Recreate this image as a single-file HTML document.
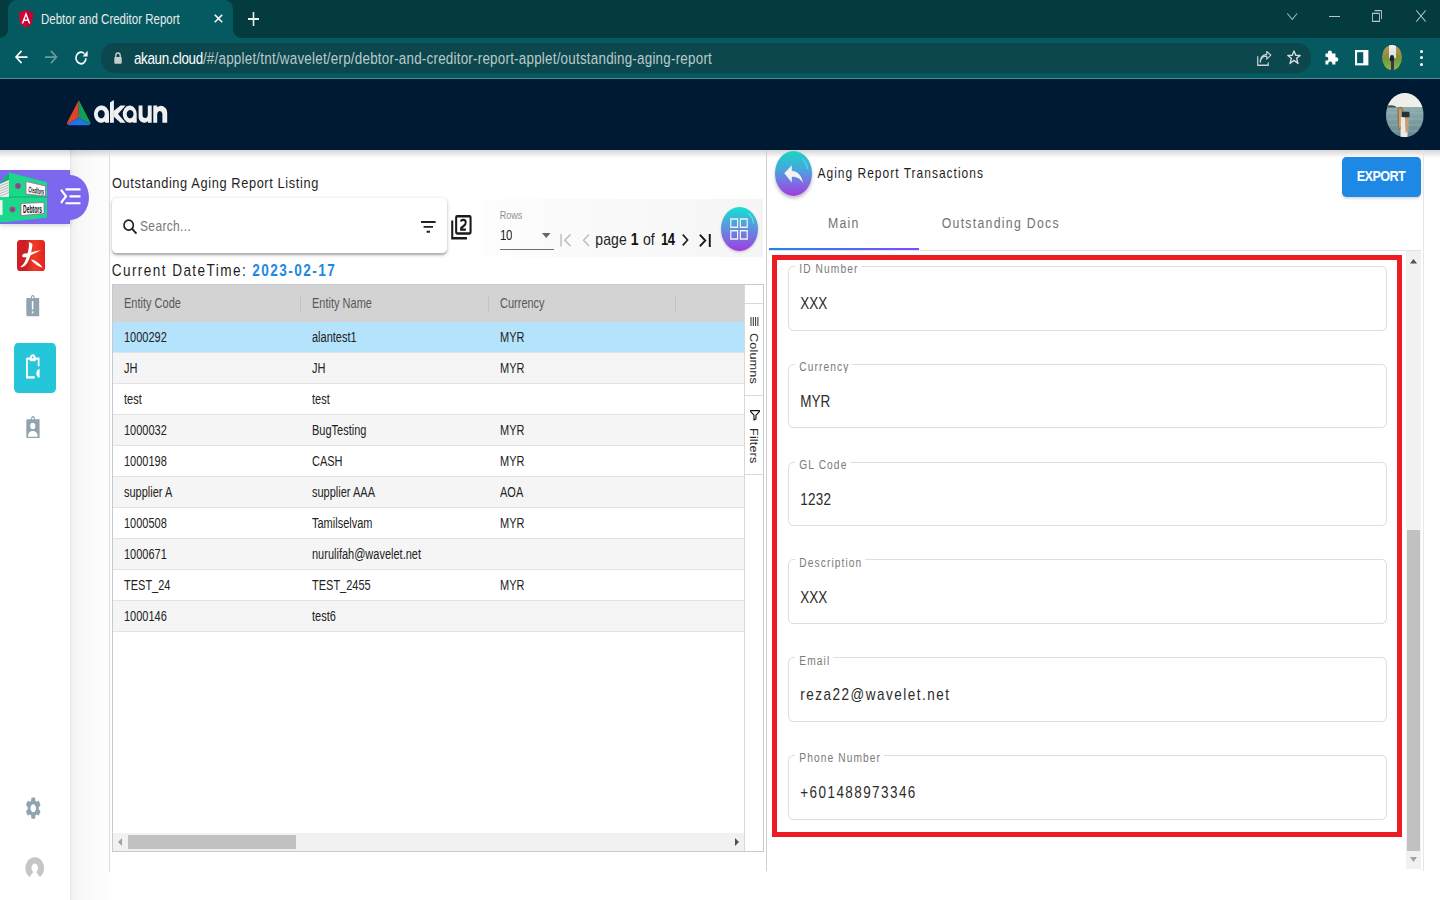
<!DOCTYPE html>
<html><head><meta charset="utf-8">
<style>
html,body{margin:0;padding:0;width:1440px;height:900px;overflow:hidden;background:#fff;}
body{font-family:"Liberation Sans",sans-serif;}
#pg{position:absolute;left:0;top:0;width:1440px;height:900px;overflow:hidden;background:#fff;}
.a{position:absolute;}
.t{position:absolute;white-space:nowrap;line-height:1;transform-origin:0 0;transform:scaleY(1.2);}
.sy{transform-origin:0 0;transform:scaleY(1.2);}
svg{position:absolute;overflow:visible;}
/* chrome */
#chrome{left:0;top:0;width:1440px;height:79px;background:#045a60;}
#tabstrip{left:0;top:0;width:1440px;height:38px;background:#033b3e;}
#tab{left:8px;top:0;width:225px;height:38px;background:#045a60;border-radius:8px 8px 0 0/9.6px 9.6px 0 0;}
#tline{left:0;top:78px;width:1440px;height:1px;background:#4b8f93;}
#omni{left:101px;top:42.5px;width:1210px;height:30.5px;background:#0d474e;border-radius:13px/15.25px;}
#hdr{left:0;top:79px;width:1440px;height:71px;background:#001a33;}
#hshadow{left:0;top:150px;width:1440px;height:8px;background:linear-gradient(rgba(0,0,0,.16),rgba(0,0,0,0));}
.ct{font-size:11.5px;color:#e8eaed;}
/* sidebar */
#sbsh{left:70px;top:150px;width:39px;height:750px;background:linear-gradient(90deg,#e4e4e4,#f1f1f1 5%,#f7f7f7 22%,#fbfbfb 55%,#fdfdfd);}
/* left panel */
#lline{left:109px;top:150px;width:1px;height:721.5px;background:#dcdcdc;}
#rline1{left:766px;top:150px;width:1px;height:721px;background:#d0d0d0;}
#rline2{left:1423px;top:150px;width:1px;height:721px;background:#e6e6e6;}
#search{left:112px;top:198.3px;width:335px;height:54.5px;background:#fff;border-radius:4px/4.8px;box-shadow:0 1.2px 3.6px rgba(0,0,0,.28),0 1.2px 1.2px rgba(0,0,0,.1);}
#pband{left:483px;top:199px;width:280px;height:58px;background:linear-gradient(90deg,#fdfdfd,#f5f5f5);}
#grid{left:112px;top:283.6px;width:651.6px;height:568px;border:1px solid #c7cbd1;box-sizing:border-box;background:#fff;overflow:hidden;}
.row{position:absolute;left:0;width:631px;height:31.03px;border-bottom:1px solid #e2e2e2;box-sizing:border-box;font-size:11px;color:#222;}
.row span{position:absolute;top:8px;line-height:1;white-space:nowrap;transform-origin:0 0;transform:scaleY(1.33);}
.r0{background:#fff;} .r1{background:#f5f5f5;} .sel{background:#b5e3fb;}
.hdrrow{position:absolute;left:0;top:0;width:631px;height:37.6px;background:#d3d3d3;font-size:11px;color:#585858;}
.hdrrow span{position:absolute;top:11.3px;line-height:1;white-space:nowrap;transform-origin:0 0;transform:scaleY(1.3);}
.hsep{position:absolute;top:10px;width:1px;height:17px;background:#c4c4c4;}
/* right panel */
#rbox{left:772.2px;top:255px;width:629.8px;height:581.7px;border:5px solid #ed1c24;border-top-width:5px;border-bottom-width:5px;box-sizing:border-box;}
.fld{position:absolute;left:788.3px;width:598.4px;height:64.5px;border:1px solid #dedede;box-sizing:border-box;border-radius:5px/6px;}
.flab{position:absolute;left:6px;padding:0 3px 0 4px;background:#fff;font-size:10.2px;color:#7a7a7a;letter-spacing:1.1px;line-height:1;white-space:nowrap;transform-origin:0 0;transform:scaleY(1.2);}
.fval{position:absolute;left:11px;font-size:13.5px;color:#2b2b2b;line-height:1;white-space:nowrap;transform-origin:0 0;transform:scaleY(1.2);}
</style></head><body>
<div id="pg">
  <!-- CHROME -->
  <div id="chrome" class="a"></div>
  <div id="tabstrip" class="a"></div>
  <div id="tab" class="a"></div>
  <div class="a" style="left:0;top:30px;width:8px;height:8px;background:radial-gradient(circle at 0 0,#033b3e 7.5px,#045a60 8px);"></div>
  <div class="a" style="left:233px;top:30px;width:8px;height:8px;background:radial-gradient(circle at 100% 0,#033b3e 7.5px,#045a60 8px);"></div>
  <!-- angular icon -->
  <svg style="left:19px;top:10px" width="14" height="17.5px" viewBox="0 0 250 264" preserveAspectRatio="none">
    <path d="M125 0 L0 44 L19 209 L125 264 L231 209 L250 44Z" fill="#dd0031"/>
    <path d="M125 0 L125 264 L231 209 L250 44Z" fill="#c3002f"/>
    <path d="M125 30 L47 205 H76 L92 166 H158 L174 205 H203Z M125 90 L148 142 H102Z" fill="#fff"/>
  </svg>
  <div class="t ct" style="left:41px;top:12.6183px;">Debtor and Creditor Report</div>
  <svg style="left:213.5px;top:14px" width="9" height="9px" viewBox="0 0 9 9" preserveAspectRatio="none"><path d="M0.8 0.8L8.2 8.2M8.2 0.8L0.8 8.2" stroke="#fff" stroke-width="1.6"/></svg>
  <svg style="left:248px;top:12px" width="11" height="14px" viewBox="0 0 11 11" preserveAspectRatio="none"><path d="M5.5 0V11M0 5.5H11" stroke="#e6eeee" stroke-width="1.6"/></svg>
  <!-- window controls -->
  <svg style="left:1286.5px;top:13px" width="10.5" height="7px" viewBox="0 0 10 6" preserveAspectRatio="none"><path d="M0.3 0.3L5 5.5L9.7 0.3" stroke="#9ab7b8" stroke-width="0.9" fill="none"/></svg>
  <svg style="left:1329px;top:16px" width="11" height="1px" viewBox="0 0 11 1" preserveAspectRatio="none"><path d="M0 0.5H11" stroke="#b5c9ca" stroke-width="1"/></svg>
  <svg style="left:1372px;top:10px" width="10" height="12px" viewBox="0 0 10 10" preserveAspectRatio="none"><path d="M0.5 2.8 h6.5 a0.5 0.5 0 0 1 .5 .5 v6.2 h-7z" stroke="#b5c9ca" stroke-width="0.9" fill="none"/><path d="M2.6 0.5 h6.4 a0.5 .5 0 0 1 .5 .5 v6.5" stroke="#b5c9ca" stroke-width="0.9" fill="none"/></svg>
  <svg style="left:1416px;top:10px" width="10" height="12px" viewBox="0 0 10 10" preserveAspectRatio="none"><path d="M0.3 0.3L9.7 9.7M9.7 0.3L0.3 9.7" stroke="#b5c9ca" stroke-width="0.9"/></svg>
  <div id="toolbarline" class="a"></div>
  <!-- nav -->
  <svg style="left:14.5px;top:50px" width="12.5" height="14px" viewBox="0 0 12 12" preserveAspectRatio="none"><path d="M12 6H1.2M6.3 0.8L1 6L6.3 11.2" stroke="#fff" stroke-width="1.5" fill="none"/></svg>
  <svg style="left:44.5px;top:50px" width="12.5" height="14px" viewBox="0 0 12 12" preserveAspectRatio="none"><path d="M0 6H10.8M5.7 0.8L11 6L5.7 11.2" stroke="#6c9da0" stroke-width="1.5" fill="none"/></svg>
  <svg style="left:74.5px;top:50px" width="13" height="15px" viewBox="0 0 13 13" preserveAspectRatio="none"><path d="M11 7.2A5 5 0 1 1 9.3 3.1" stroke="#fff" stroke-width="1.6" fill="none"/><path d="M12.6 0.6V5.6H7.6Z" fill="#fff"/></svg>
  <div id="omni" class="a"></div>
  <svg style="left:114.4px;top:52.2px" width="8" height="11.7px" viewBox="0 0 8 10" preserveAspectRatio="none"><path d="M1.8 4.5V3A2.2 2.2 0 0 1 6.2 3V4.5" stroke="#c8cfd0" stroke-width="1.3" fill="none"/><rect x="0.3" y="4.3" width="7.4" height="5.7" rx="0.8" fill="#c8cfd0"/></svg>
  <div class="t" style="left:133.9px;top:51.2883px;font-size:13.4px;color:#fff;letter-spacing:-0.29px;">akaun.cloud<span style="color:#b9cacb;letter-spacing:0.23px;">/#/applet/tnt/wavelet/erp/debtor-and-creditor-report-applet/outstanding-aging-report</span></div>
  <!-- right toolbar icons -->
  <svg style="left:1256.7px;top:51px" width="14.3" height="15px" viewBox="0 0 14 14" preserveAspectRatio="none"><path d="M0.7 5V13.3H11V10.8" stroke="#c5d3d4" stroke-width="1.2" fill="none"/><path d="M3.2 10.5C3.5 6.5 6 4.8 9.5 4.8V7.6L13.5 3.8L9.5 0.5V3.2C5.5 3.5 3.2 6.5 3.2 10.5Z" stroke="#c5d3d4" stroke-width="1.1" fill="none" stroke-linejoin="round"/></svg>
  <svg style="left:1287px;top:50px" width="14" height="15px" viewBox="0 0 14 14" preserveAspectRatio="none"><path d="M7 0.9L8.8 5H13.2L9.6 7.7L11 12.6L7 9.7L3 12.6L4.4 7.7L0.8 5H5.2Z" stroke="#d7dede" stroke-width="1.3" fill="none" stroke-linejoin="round"/></svg>
  <svg style="left:1324.7px;top:50px" width="13.8" height="15px" viewBox="0 0 14 14" preserveAspectRatio="none"><path d="M5 0.5C6.3 0.5 7 1.3 7 2.5V3.2H10.6V6.8H11.3C12.6 6.8 13.5 7.6 13.5 8.8C13.5 10 12.6 10.8 11.3 10.8H10.6V13.5H7.4V12.6C7.4 11.5 6.6 10.7 5.4 10.7C4.2 10.7 3.4 11.5 3.4 12.6V13.5H0.5V9.9H1.3C2.6 9.9 3.4 9.2 3.4 8.1C3.4 7 2.6 6.3 1.3 6.3H0.5V3.2H3V2.5C3 1.3 3.7 0.5 5 0.5Z" fill="#fff"/></svg>
  <svg style="left:1354.6px;top:49.6px" width="13.4" height="15.4px" viewBox="0 0 13 14" preserveAspectRatio="none"><rect x="1" y="1" width="11" height="12" stroke="#fff" stroke-width="2" fill="none"/><rect x="8" y="1" width="4" height="12" fill="#fff"/></svg>
  <div class="a" style="left:1381.7px;top:45px;width:20.5px;height:25px;border-radius:50%;overflow:hidden;background:linear-gradient(180deg,#b99a52 0%,#9c8a4a 40%,#6f9a3a 55%,#9bb04e 100%);">
    <div class="a" style="left:7px;top:0;width:7px;height:13px;background:linear-gradient(#f1f1ee,#d9dcd6);"></div>
    <div class="a" style="left:8.5px;top:10px;width:4px;height:6px;background:#222;border-radius:2px 2px 0 0;"></div>
    <div class="a" style="left:9px;top:15.5px;width:3px;height:10px;background:#2a3a55;"></div>
  </div>
  <div class="a" style="left:1420px;top:49.5px;width:3px;height:3px;border-radius:50%;background:#fff;"></div>
  <div class="a" style="left:1420px;top:56px;width:3px;height:3px;border-radius:50%;background:#fff;"></div>
  <div class="a" style="left:1420px;top:62.5px;width:3px;height:3px;border-radius:50%;background:#fff;"></div>
  <div id="tline" class="a"></div>

  <!-- APP HEADER -->
  <div id="hdr" class="a"></div>
  <svg style="left:66.7px;top:99.9px" width="23.5" height="25.3px" viewBox="0 0 24 22" preserveAspectRatio="none">
    <path d="M12 0 L12 15.5 L0.5 21 Q-0.5 20.5 0 19.8Z" fill="#e0432b"/>
    <path d="M12 0 L24 19.8 Q24.3 20.6 23.5 21 L12 15.5Z" fill="#10a05a"/>
    <path d="M12 15.5 L23.5 21 Q23 22 22 22 H2 Q1 22 0.5 21Z" fill="#1b74e8"/>
  </svg>
  <svg style="left:90px;top:95px" width="80" height="33" viewBox="0 0 80 33" preserveAspectRatio="none">
    <g transform="scale(1,1.2)" fill="#f0f0f0">
      <path fill-rule="evenodd" d="M11.25 8.75A7.3 7.2 0 1 0 15.1 22.1V23.17H19V15.9A7.4 7.2 0 0 0 11.25 8.75ZM11.25 12.5A3.5 3.45 0 1 0 11.26 12.5Z"/>
      <path d="M20 6.2L23.9 4.2V23.17H20Z"/>
      <path d="M23.9 13.2L30.5 8.75H35.6L28 15.9L35.6 23.17H30.5L23.9 18.2Z"/>
      <path fill-rule="evenodd" d="M40.1 8.75A7.2 7.2 0 1 0 42.9 22.5V23.17H46.7V15.9A7.2 7.2 0 0 0 40.1 8.75ZM40.1 12.5A3.45 3.45 0 1 0 40.11 12.5Z"/>
      <path d="M48.6 8.75H52.5V16.3A2.6 2.9 0 0 0 57.8 16.3V8.75H61.7V23.17H57.8V21.6A5.5 5.5 0 0 1 48.6 17Z"/>
      <path d="M63.3 23.17H67.2V15.6A2.65 2.9 0 0 1 72.4 15.6V23.17H77.2V15A6.2 6.2 0 0 0 67.2 10.3V8.75H63.3Z"/>
    </g>
  </svg>
  <svg style="left:1386px;top:92.7px" width="37.7" height="44.3" viewBox="0 0 37.7 44.3">
    <defs><clipPath id="avc"><ellipse cx="18.85" cy="22.15" rx="18.85" ry="22.15"/></clipPath>
    <linearGradient id="sea" x1="0" y1="0" x2="0" y2="1"><stop offset="0" stop-color="#a3bdbf"/><stop offset="1" stop-color="#638a90"/></linearGradient></defs>
    <g clip-path="url(#avc)">
      <rect width="37.7" height="44.3" fill="url(#sea)"/>
      <rect width="37.7" height="14" fill="#efefea"/>
      <path d="M0 14.5L2 12.6L6 12.2L9 13L11 14.5Z" fill="#3f524c"/>
      <path d="M0 20H37.7M0 26H37.7M0 32H37.7M0 38H37.7" stroke="#b9cfd0" stroke-width="0.6" opacity="0.6"/>
      <path d="M11.5 16C12 14 14 13.5 15.5 14C17 14.5 17.5 17 17.3 20L17 35L12.3 38C11.5 31 11 23 11.5 16Z" fill="#9a7650"/>
      <path d="M13 16C13.5 15 15 15 15.5 16L15.3 33L13 35Z" fill="#c0a078"/>
      <path d="M15 24H21.5V44.3H14.5Z" fill="#ece8e6"/>
      <path d="M19 24H23L22.5 38L19.5 40Z" fill="#c49c76"/>
      <rect x="16" y="18.8" width="7.5" height="5.5" rx="1" fill="#2b2f33"/>
    </g>
  </svg>
  <!-- SIDEBAR -->
  <div id="sbsh" class="a"></div>
  <div id="hshadow" class="a"></div>
  <!-- purple menu -->
  <div class="a" style="left:0;top:170px;width:70px;height:54.4px;background:#7b68ee;box-shadow:0 2.4px 4.8px rgba(0,0,0,.18);"></div>
  <div class="a" style="left:51px;top:174.9px;width:38px;height:45.6px;border-radius:50%;background:#7b68ee;"></div>
  <!-- folders -->
  <svg style="left:0;top:171px" width="48" height="52" viewBox="0 0 48 52">
    <path d="M0 12.5L9 1.6L47 11.3V27H0Z" fill="#1ad98a"/>
    <path d="M0 12.5L9 1.6V9L0 13Z" fill="#0fb56f"/>
    <path d="M0 13L9 9V26H0Z" fill="#ececec"/>
    <path d="M0 15L9 11.5M0 17.5L9 14M0 20L9 16.5M0 22.5L9 19M0 25L9 21.5" stroke="#a8a8a8" stroke-width="0.7"/>
    <path d="M9 25H47V27H9Z" fill="#14c27a"/>
    <circle cx="18" cy="15" r="2.4" fill="#5d5d6a" stroke="#c03aa0" stroke-width="1.1"/>
    <path d="M26 10.5L45.5 15V25L26 23Z" fill="#fff" stroke="#b84a9a" stroke-width="0.7"/>
    <text x="28" y="21.3" textLength="16" lengthAdjust="spacingAndGlyphs" font-size="8.5" font-family="Liberation Sans" font-weight="bold" fill="#111" transform="rotate(9 28 21)">Creditors</text>
    <path d="M0 27H47V46.7L2 51.5L0 51Z" fill="#1ad98a"/>
    <path d="M0 29H2.5V44H0Z" fill="#f2f2f2"/>
    <circle cx="12.5" cy="38.5" r="2.4" fill="#5d5d6a" stroke="#c03aa0" stroke-width="1.1"/>
    <path d="M21 32.5L44 31.5V42.5L21 44.5Z" fill="#fff" stroke="#b84a9a" stroke-width="0.7"/>
    <text x="23" y="42" textLength="19" lengthAdjust="spacingAndGlyphs" font-size="10" font-family="Liberation Sans" font-weight="bold" fill="#111">Debtors</text>
  </svg>
  <svg style="left:60px;top:188.3px" width="21" height="16.7px" viewBox="0 0 21 14" preserveAspectRatio="none">
    <path d="M1 1.5L6 7L1 12.5" stroke="#fff" stroke-width="2" fill="none"/>
    <path d="M5.5 1.2H20.5M9.5 7H20.5M5.5 12.8H20.5" stroke="#fff" stroke-width="1.8"/>
  </svg>
  <!-- red app icon -->
  <div class="a" style="left:16.7px;top:239.8px;width:28.3px;height:31.1px;border-radius:3px/3.6px;background:linear-gradient(90deg,#d42027,#c81e25 30%,#ef3b24 60%,#e2231f);"></div>
  <svg style="left:16.7px;top:239.8px" width="28.3" height="31.1" viewBox="0 0 28 28" preserveAspectRatio="none">
    <path d="M11.5 2.3C13.5 1.8 15.6 2.8 15.3 4.8L14.2 10.5C13.2 15 11.5 19.5 8.5 22.5C7 24 5 24.8 3.3 24.3C4.5 23.2 6.5 21.8 7.6 19.8C9.5 16 10.7 12 11.8 6C12 4.5 12 3.4 11.5 2.3Z" fill="#fff"/>
    <path d="M5.5 13.2C6.5 12 8.5 12.3 10.5 12C14.5 11 19 9.5 23.8 9.2C19.5 11.2 15 13 10.8 14.8C9 15.5 7 16 5.5 15.2C5 14.7 5 13.8 5.5 13.2Z" fill="#fff"/>
    <path d="M13.8 17.3C15.5 17.6 18 18.6 20.5 20.3C22.5 21.6 24.5 23.2 25.2 25C22.5 24.3 19.5 22.7 17.3 21C15.8 19.9 14.6 18.6 13.8 17.3Z" fill="#fff"/>
  </svg>
  <!-- clipboard alert -->
  <svg style="left:26.4px;top:295px" width="13.2" height="21.8px" viewBox="0 0 14 18" preserveAspectRatio="none">
    <path d="M1.5 2.5H5.2C5.2 1 6 0 7.2 0C8.4 0 9.2 1 9.2 2.5H14V17.6H1.5Q0.3 17.6 0.3 16.4V3.7Q0.3 2.5 1.5 2.5Z" fill="#90a4ae"/>
    <circle cx="7.2" cy="2" r="0.9" fill="#fff"/>
    <rect x="6.2" y="5" width="1.6" height="7" fill="#fff"/>
    <rect x="6.2" y="13.5" width="1.6" height="1.6" fill="#fff"/>
  </svg>
  <!-- teal active -->
  <div class="a" style="left:14.2px;top:342.6px;width:41.8px;height:50.2px;border-radius:4px/4.8px;background:#26c6da;"></div>
  <svg style="left:26.4px;top:355px" width="13.6" height="23.5px" viewBox="0 0 14 19" preserveAspectRatio="none">
    <path d="M1 3H5C5 1.3 6 0.3 7 0.3C8 0.3 9 1.3 9 3H13V9" stroke="#fff" stroke-width="1.8" fill="none"/>
    <path d="M1 2.5V18H9" stroke="#fff" stroke-width="1.8" fill="none"/>
    <path d="M14 11A4 4 0 0 0 14 18.5Z M13 11.5 A3.6 3.6 0 0 0 13 18.3" fill="#fff"/>
    <rect x="4" y="2.5" width="6" height="2.5" fill="#fff"/>
  </svg>
  <!-- clipboard account -->
  <svg style="left:26.4px;top:416px" width="13.6" height="22.5px" viewBox="0 0 14 18" preserveAspectRatio="none">
    <path d="M1.5 2.5H5.2C5.2 1 6 0 7.2 0C8.4 0 9.2 1 9.2 2.5H14V17.6H1.5Q0.3 17.6 0.3 16.4V3.7Q0.3 2.5 1.5 2.5Z" fill="#90a4ae"/>
    <circle cx="7.2" cy="2" r="0.9" fill="#fff"/>
    <circle cx="7" cy="8" r="2.6" fill="#fff"/>
    <path d="M2 16.5C2 13 4.5 12 7 12C9.5 12 12 13 12 16.5Z" fill="#fff"/>
  </svg>
  <!-- gear -->
  <svg style="left:25.7px;top:796.6px" width="14.5" height="22.4" viewBox="2.6 1.9 18.8 20.2" preserveAspectRatio="none">
    <path fill="#90a4ae" d="M19.14 12.94c.04-.3.06-.61.06-.94 0-.32-.02-.64-.07-.94l2.03-1.58a.49.49 0 0 0 .12-.61l-1.92-3.32a.488.488 0 0 0-.59-.22l-2.39.96c-.5-.38-1.03-.7-1.62-.94l-.36-2.54a.484.484 0 0 0-.48-.41h-3.84c-.24 0-.43.17-.47.41l-.36 2.54c-.59.24-1.13.57-1.62.94l-2.39-.96c-.22-.08-.47 0-.59.22L2.74 8.87c-.12.21-.08.47.12.61l2.03 1.58c-.05.3-.09.63-.09.94s.02.64.07.94l-2.03 1.58a.49.49 0 0 0-.12.61l1.92 3.32c.12.22.37.29.59.22l2.39-.96c.5.38 1.03.7 1.62.94l.36 2.54c.05.24.24.41.48.41h3.84c.24 0 .44-.17.47-.41l.36-2.54c.59-.24 1.13-.56 1.62-.94l2.39.96c.22.08.47 0 .59-.22l1.92-3.32c.12-.22.07-.47-.12-.61l-2.01-1.58zM12 15.6c-1.98 0-3.6-1.62-3.6-3.6s1.62-3.6 3.6-3.6 3.6 1.62 3.6 3.6-1.62 3.6-3.6 3.6z"/>
  </svg>
  <!-- person -->
  <svg style="left:24.9px;top:856.5px" width="19.5" height="20" viewBox="0 0 20 20" preserveAspectRatio="none">
    <path d="M6.56 17.45A6.5 7.6 0 1 1 13.44 17.45" stroke="#c6c6c6" stroke-width="6.3" fill="none"/>
  </svg>

  <!-- LEFT PANEL -->
  <div id="lline" class="a"></div>
  <div class="t" style="left:112px;top:175.9978px;font-size:12.8px;color:#1f1f1f;letter-spacing:0.62px;">Outstanding Aging Report Listing</div>
  <div id="search" class="a"></div>
  <svg style="left:122.8px;top:219px" width="14.2" height="15.4px" viewBox="0 0 14 14" preserveAspectRatio="none"><circle cx="5.6" cy="5.6" r="4.6" stroke="#222" stroke-width="1.6" fill="none"/><path d="M8.9 8.9L13.3 13.3" stroke="#222" stroke-width="1.8"/></svg>
  <div class="t" style="left:140px;top:218.8104px;font-size:12px;color:#777;letter-spacing:0.35px;">Search...</div>
  <svg style="left:420.8px;top:220.7px" width="14.6" height="11.8px" viewBox="0 0 14.6 10" preserveAspectRatio="none"><path d="M0 0.9H14.6M2.6 5H12M5.6 9.1H9" stroke="#222" stroke-width="1.6"/></svg>
  <svg style="left:451.4px;top:215px" width="20.6" height="24.7px" viewBox="0 0 20 20" preserveAspectRatio="none">
    <path d="M1.2 4.5V18.8H15.5" stroke="#1a1a1a" stroke-width="2" fill="none"/>
    <rect x="5" y="1" width="14" height="14" rx="1" stroke="#1a1a1a" stroke-width="2" fill="none"/>
    <path d="M9.5 5.2Q9.8 4 12 4Q14.3 4 14.3 6Q14.3 7.5 12.5 8.7L9.8 10.6V11.8H14.5" stroke="#1a1a1a" stroke-width="1.9" fill="none"/>
  </svg>
  <div id="pband" class="a"></div>
  <div class="t" style="left:499.7px;top:210.8578px;font-size:9px;color:#8f8f8f;">Rows</div>
  <div class="t" style="left:500px;top:228.6183px;font-size:11.5px;color:#222;letter-spacing:-0.4px;">10</div>
  <div class="a" style="left:500px;top:248.5px;width:54px;height:1.2px;background:#6f6f6f;"></div>
  <svg style="left:541.7px;top:233px" width="8.5" height="5px" viewBox="0 0 10 5" preserveAspectRatio="none"><path d="M0 0H10L5 5Z" fill="#666"/></svg>
  <svg style="left:559.7px;top:234px" width="11.5" height="12.5px" viewBox="0 0 11 12" preserveAspectRatio="none"><path d="M1 0V12" stroke="#c2b4b4" stroke-width="1.3"/><path d="M10 0.5L4.5 6L10 11.5" stroke="#b9b9b9" stroke-width="1.3" fill="none"/></svg>
  <svg style="left:582px;top:234px" width="8" height="12.5px" viewBox="0 0 8 12" preserveAspectRatio="none"><path d="M7 0.5L1.5 6L7 11.5" stroke="#b9b9b9" stroke-width="1.3" fill="none"/></svg>
  <div class="t" style="left:595.3px;top:231.2788px;font-size:14px;color:#222;letter-spacing:0.1px;">page</div>
  <div class="t" style="left:630.8px;top:231.2788px;font-size:14px;color:#111;font-weight:bold;">1</div>
  <div class="t" style="left:643px;top:231.2788px;font-size:14px;color:#222;">of</div>
  <div class="t" style="left:661px;top:232.2946px;font-size:13px;color:#111;font-weight:bold;letter-spacing:-0.6px;">14</div>
  <svg style="left:682px;top:233.5px" width="6.5" height="12px" viewBox="0 0 7 12" preserveAspectRatio="none"><path d="M0.8 0.7L6 6L0.8 11.3" stroke="#1a1a1a" stroke-width="1.7" fill="none"/></svg>
  <svg style="left:699.4px;top:233.5px" width="11.6" height="13px" viewBox="0 0 11 12" preserveAspectRatio="none"><path d="M0.8 0.7L6 6L0.8 11.3" stroke="#1a1a1a" stroke-width="1.7" fill="none"/><path d="M10.2 0V12" stroke="#111" stroke-width="1.8"/></svg>
  <div class="a" style="left:721px;top:206.8px;width:36.8px;height:44.45px;border-radius:50%;background:linear-gradient(180deg,#12e3cf 0%,#4aa7dc 35%,#7a6ee0 70%,#a23ae0 100%);box-shadow:0 1.2px 2.4px rgba(0,0,0,.2);"></div>
  <svg style="left:730px;top:218px" width="18" height="22" viewBox="0 0 18 18" preserveAspectRatio="none"><rect x="0.8" y="0.8" width="6.8" height="6.8" stroke="#f4f4f4" stroke-width="1.2" fill="none"/><rect x="10.4" y="0.8" width="6.8" height="6.8" stroke="#f4f4f4" stroke-width="1.2" fill="none"/><rect x="0.8" y="10.4" width="6.8" height="6.8" stroke="#f4f4f4" stroke-width="1.2" fill="none"/><rect x="10.4" y="10.4" width="6.8" height="6.8" stroke="#f4f4f4" stroke-width="1.2" fill="none"/></svg>
  <svg style="left:721px;top:206.8px" width="37" height="44" viewBox="0 0 37 44" preserveAspectRatio="none"><path d="M27.5 6Q31.5 10 32.8 16.5" stroke="#8ff0f0" stroke-width="0.9" fill="none" opacity="0.85"/></svg>
  <div class="t" style="left:111.7px;top:262.7851px;font-size:13.6px;color:#1f1f1f;letter-spacing:1.42px;">Current DateTime: <b style="color:#1e88e5;letter-spacing:1.45px;">2023-02-17</b></div>

  <div id="grid" class="a">
    <div class="hdrrow"><span style="left:11px">Entity Code</span><div class="hsep" style="left:187px"></div><span style="left:199px">Entity Name</span><div class="hsep" style="left:375px"></div><span style="left:387px">Currency</span><div class="hsep" style="left:562px"></div></div>
    <div class="row sel" style="top:37.6px"><span style="left:11px">1000292</span><span style="left:199px">alantest1</span><span style="left:387px">MYR</span></div>
    <div class="row r1" style="top:68.63px"><span style="left:11px">JH</span><span style="left:199px">JH</span><span style="left:387px">MYR</span></div>
    <div class="row r0" style="top:99.66px"><span style="left:11px">test</span><span style="left:199px">test</span><span style="left:387px"></span></div>
    <div class="row r1" style="top:130.69px"><span style="left:11px">1000032</span><span style="left:199px">BugTesting</span><span style="left:387px">MYR</span></div>
    <div class="row r0" style="top:161.72px"><span style="left:11px">1000198</span><span style="left:199px">CASH</span><span style="left:387px">MYR</span></div>
    <div class="row r1" style="top:192.75px"><span style="left:11px">supplier A</span><span style="left:199px">supplier AAA</span><span style="left:387px">AOA</span></div>
    <div class="row r0" style="top:223.78px"><span style="left:11px">1000508</span><span style="left:199px">Tamilselvam</span><span style="left:387px">MYR</span></div>
    <div class="row r1" style="top:254.81px"><span style="left:11px">1000671</span><span style="left:199px">nurulifah@wavelet.net</span><span style="left:387px"></span></div>
    <div class="row r0" style="top:285.84px"><span style="left:11px">TEST_24</span><span style="left:199px">TEST_2455</span><span style="left:387px">MYR</span></div>
    <div class="row r1" style="top:316.87px"><span style="left:11px">1000146</span><span style="left:199px">test6</span><span style="left:387px"></span></div>
    <!-- side bar -->
    <div class="a" style="left:631px;top:0;width:20px;height:566px;background:#fff;border-left:1px solid #d9d9d9;box-sizing:border-box;"></div>
    <div class="a" style="left:631px;top:18px;width:20px;height:1px;background:#d9d9d9;"></div>
    <div class="a" style="left:631px;top:110px;width:20px;height:1px;background:#d9d9d9;"></div>
    <div class="a" style="left:631px;top:189px;width:20px;height:1px;background:#d9d9d9;"></div>
    <svg style="left:637px;top:32px" width="9" height="9px" viewBox="0 0 9 9" preserveAspectRatio="none"><path d="M1 0V9M3.3 0V9M5.6 0V9M7.9 0V9" stroke="#333" stroke-width="1"/></svg>
    <div class="t" style="left:645.5px;top:48px"><span style="display:block;font-size:10.6px;color:#2a2a2a;transform-origin:0 0;transform:rotate(90deg);letter-spacing:0.1px;">Columns</span></div>
    <svg style="left:636.8px;top:125.8px" width="10" height="10.5" viewBox="0 0 10 10.5" preserveAspectRatio="none"><path d="M0.6 0.6H9.4V1.6L6 5.2V9L4 10V5.2L0.6 1.6Z" stroke="#111" stroke-width="1.1" fill="none" stroke-linejoin="round"/></svg>
    <div class="t" style="left:645.5px;top:143px" ><span style="display:block;font-size:10.6px;color:#2a2a2a;transform-origin:0 0;transform:rotate(90deg);letter-spacing:0.1px;">Filters</span></div>
    <!-- h scrollbar -->
    <div class="a" style="left:0;top:548.2px;width:631px;height:18px;background:#f1f1f1;"></div>
    <div class="a" style="left:15.3px;top:550.4px;width:167.7px;height:14.5px;background:#c1c1c1;"></div>
    <svg style="left:5px;top:553px" width="4" height="8px" viewBox="0 0 4 8" preserveAspectRatio="none"><path d="M4 0V8L0 4Z" fill="#a3a3a3"/></svg>
    <svg style="left:622px;top:553px" width="4" height="8px" viewBox="0 0 4 8" preserveAspectRatio="none"><path d="M0 0V8L4 4Z" fill="#505050"/></svg>
  </div>

  <!-- RIGHT PANEL -->
  <div id="rline1" class="a"></div>
  <div id="rline2" class="a"></div>
  <div class="a" style="left:774.7px;top:151.3px;width:37.3px;height:44.7px;border-radius:50%;background:linear-gradient(180deg,#17d5c5 0%,#45a8dc 40%,#7a70e2 70%,#a23ae0 100%);box-shadow:0 2.4px 3.6px rgba(0,0,0,.25);"></div>
  <svg style="left:783.8px;top:164.5px" width="19.5" height="18.5" viewBox="0 0 20 18" preserveAspectRatio="none"><path d="M8 0.3L0.3 8L8 17V11.5C13 11.5 16.5 12.8 19.5 17.5C18.5 11 14.8 6.2 8 5.5Z" fill="#f3f3f3"/></svg>
  <svg style="left:775px;top:152px" width="37" height="44" viewBox="0 0 37 44" preserveAspectRatio="none"><path d="M27.5 6.5Q31.5 10.5 32.8 17" stroke="#7fe9ef" stroke-width="0.9" fill="none" opacity="0.85"/></svg>
  <div class="t" style="left:817.5px;top:165.8104px;font-size:12px;color:#1f1f1f;letter-spacing:1px;">Aging Report Transactions</div>
  <div class="a" style="left:1341.8px;top:156.8px;width:79px;height:40.1px;border-radius:4px/4.8px;background:#1e88e5;box-shadow:0 1.8px 2.4px rgba(0,0,0,.14);"></div>
  <div class="t" style="left:1356.7px;top:168.8009px;font-size:12.6px;font-weight:bold;color:#fff;letter-spacing:-0.55px;">EXPORT</div>
  <div class="t" style="left:828px;top:216.3057px;font-size:12.3px;color:#737373;letter-spacing:1.26px;">Main</div>
  <div class="t" style="left:941.7px;top:216.3057px;font-size:12.3px;color:#737373;letter-spacing:1.28px;">Outstanding Docs</div>
  <div class="a" style="left:769px;top:249.5px;width:652px;height:1.5px;background:#e3e3e3;"></div>
  <svg style="left:769px;top:248px" width="150" height="2px" viewBox="0 0 150 2" preserveAspectRatio="none"><defs><linearGradient id="ug"><stop offset="0" stop-color="#1e88e5"/><stop offset="1" stop-color="#7c4dff"/></linearGradient></defs><rect width="150" height="2" fill="url(#ug)"/></svg>
  <div class="a" style="left:1405.7px;top:251px;width:15.1px;height:618.4px;background:#f1f1f1;"></div>
  <svg style="left:1410px;top:258.7px" width="7" height="4.5px" viewBox="0 0 7 4" preserveAspectRatio="none"><path d="M0 4H7L3.5 0Z" fill="#505050"/></svg>
  <div class="a" style="left:1407px;top:530px;width:13px;height:320.5px;background:#c1c1c1;"></div>
  <svg style="left:1410px;top:857px" width="7" height="5px" viewBox="0 0 7 4" preserveAspectRatio="none"><path d="M0 0H7L3.5 4Z" fill="#a3a3a3"/></svg>
  <div id="rbox" class="a"></div>
  <div class="fld" style="top:266px"><div class="flab" style="top:-3.5612px">ID Number</div><div class="fval" style="top:29.1867px">XXX</div></div>
  <div class="fld" style="top:363.8px"><div class="flab" style="top:-3.5612px">Currency</div><div class="fval" style="top:29.1867px">MYR</div></div>
  <div class="fld" style="top:461.6px"><div class="flab" style="top:-3.5612px">GL Code</div><div class="fval" style="top:29.1867px;letter-spacing:0.2px">1232</div></div>
  <div class="fld" style="top:559.4px"><div class="flab" style="top:-3.5612px">Description</div><div class="fval" style="top:29.1867px">XXX</div></div>
  <div class="fld" style="top:657.2px"><div class="flab" style="top:-3.5612px">Email</div><div class="fval" style="top:29.1867px;letter-spacing:1.5px">reza22@wavelet.net</div></div>
  <div class="fld" style="top:755px"><div class="flab" style="top:-3.5612px">Phone Number</div><div class="fval" style="top:29.1867px;letter-spacing:1.42px">+601488973346</div></div>
</div>
</body></html>
